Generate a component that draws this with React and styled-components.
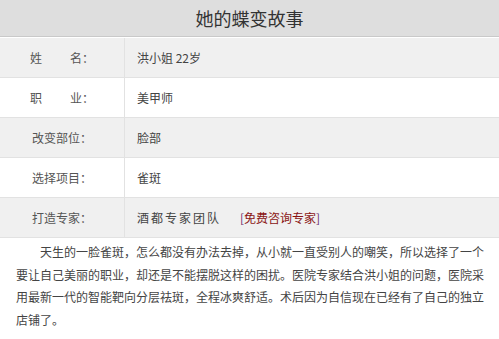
import React from "react";
import styled, { createGlobalStyle } from "styled-components";

const Global = createGlobalStyle`
  html, body { margin: 0; padding: 0; background: #fff; }
  body { font-family: "Noto Sans CJK SC", "Noto Sans", sans-serif; }
`;

const Page = styled.div`
  width: 499px;
  background: #fff;
`;

const Title = styled.h1`
  margin: 0;
  height: 36px;
  line-height: 36px;
  background: #dedede;
  border-bottom: 1px solid #c9c9c9;
  text-align: center;
  font-size: 18px;
  font-weight: normal;
  color: #333;
`;

const Row = styled.div`
  display: grid;
  grid-template-columns: 125px 1fr;
  height: 39px;
  border-top: 1px solid ${(p) => (p.$first ? "#fff" : "#e2e2e2")};
  background: ${(p) => (p.$shaded ? "#f0f0f0" : "#fff")};
`;

const Label = styled.div`
  display: flex;
  align-items: center;
  justify-content: center;
  border-right: 1px solid #e2e2e2;
  font-size: 12px;
  color: #555;
`;

const Gap = styled.span`
  display: inline-block;
  width: 28px;
`;

const Value = styled.div`
  display: flex;
  align-items: center;
  padding-left: 12px;
  font-size: 12px;
  color: #444;
  letter-spacing: ${(p) => p.$spacing || "0"};
`;

const Team = styled.span`
  letter-spacing: 2px;
  margin-right: 19px;
`;

const Consult = styled.a`
  color: #8a1414;
  text-decoration: none;
  letter-spacing: 0;
`;

const Bracket = styled.span`
  color: #6b2d6b;
`;

const Story = styled.p`
  margin: 0;
  padding: 3px 15px 6px 16px;
  border-top: 1px solid #e2e2e2;
  font-size: 12px;
  line-height: 22.5px;
  color: #444;
  text-indent: 24px;
`;

const rows = [
  { label: <>姓<Gap />名：</>, value: "洪小姐 22岁" },
  { label: <>职<Gap />业：</>, value: "美甲师" },
  { label: "改变部位：", value: "脸部" },
  { label: "选择项目：", value: "雀斑" },
  {
    label: "打造专家：",
    value: (
      <>
        <Team>酒都专家团队</Team>
        <Consult href="#">
          <Bracket>[</Bracket>免费咨询专家<Bracket>]</Bracket>
        </Consult>
      </>
    ),
  },
];

export default function App() {
  return (
    <Page>
      <Global />
      <Title>她的蝶变故事</Title>
      {rows.map((r, i) => (
        <Row key={i} $shaded={i % 2 === 0} $first={i === 0}>
          <Label>{r.label}</Label>
          <Value>{r.value}</Value>
        </Row>
      ))}
      <Story>
        天生的一脸雀斑，怎么都没有办法去掉，从小就一直受别人的嘲笑，所以选择了一个要让自己美丽的职业，却还是不能摆脱这样的困扰。医院专家结合洪小姐的问题，医院采用最新一代的智能靶向分层祛斑，全程冰爽舒适。术后因为自信现在已经有了自己的独立店铺了。
      </Story>
    </Page>
  );
}
